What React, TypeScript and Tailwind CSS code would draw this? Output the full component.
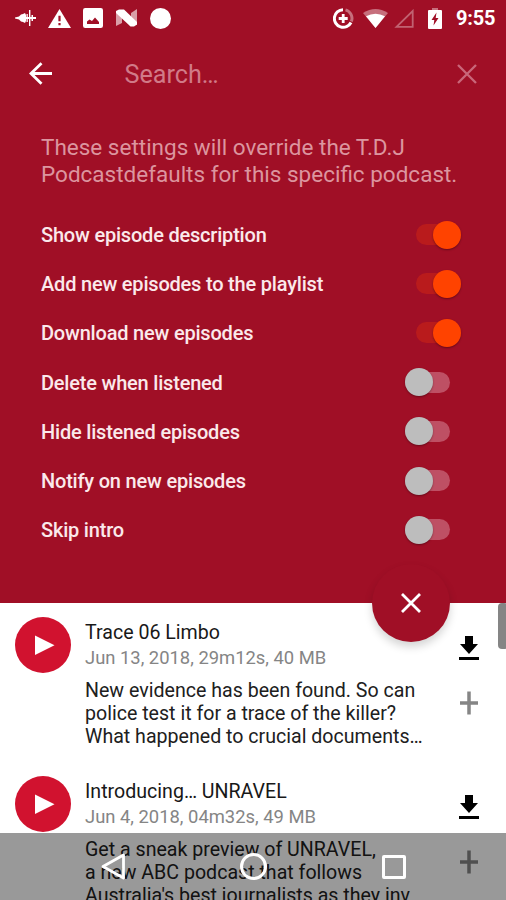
import React from "react";

const settings = [
  { label: "Show episode description", on: true },
  { label: "Add new episodes to the playlist", on: true },
  { label: "Download new episodes", on: true },
  { label: "Delete when listened", on: false },
  { label: "Hide listened episodes", on: false },
  { label: "Notify on new episodes", on: false },
  { label: "Skip intro", on: false },
];

const episodes = [
  {
    title: "Trace 06 Limbo",
    meta: "Jun 13, 2018, 29m12s, 40 MB",
    lines: ["New evidence has been found. So can", "police test it for a trace of the killer?", "What happened to crucial documents…"],
  },
  {
    title: "Introducing… UNRAVEL",
    meta: "Jun 4, 2018, 04m32s, 49 MB",
    lines: ["Get a sneak preview of UNRAVEL,", "a new ABC podcast that follows", "Australia's best journalists as they inv"],
  },
];

function StatusBar() {
  return (
    <div className="flex h-9 items-center pl-[15px] pr-[10px] text-white">
      <svg className="w-[21px] h-[18px]" viewBox="0 0 21 18" fill="white">
        <path d="M0 8.500L4 7.500L6 5.500L8 5L10 4L11 6V12L10 14L8 13L6 12.500L4 10.500L0 9.500Z" />
        <path d="M10 8h11v2h-11z" />
        <path d="M11.500 5h1.300v8h-1.300zM14 1h1.400v16h-1.400zM16.500 6h1.500v6h-1.500z" />
      </svg>
      <svg className="ml-3 w-[23px] h-[19px]" viewBox="0 0 23 20" preserveAspectRatio="none">
        <path d="M11.500 0L23 20H0Z" fill="white" />
        <path d="M10.400 7h2.200v6h-2.200zM10.400 14.800h2.200v2.300h-2.200z" fill="#a00f26" />
      </svg>
      <svg className="ml-3 w-5 h-5" viewBox="0 0 20 20">
        <rect width="20" height="20" rx="2.200" fill="white" />
        <path d="M4 16v-2.500l2.500-2 2.500 1.500 3-3.500 4 4.500v2z" fill="#a00f26" />
      </svg>
      <svg className="ml-[13px] w-[21px] h-[18px]" viewBox="0 0 21 18">
        <path d="M0 2L6 6V14L0 17ZM15 4L21 0V16L15 12Z" fill="white" opacity=".6" />
        <path d="M0 2L3 .5H8L21 13V15.500L18 17.500H14.500L0 4Z" fill="white" />
      </svg>
      <div className="ml-[13px] h-[21px] w-[21px] rounded-full bg-white" />
      <div className="grow" />
      <svg className="w-[21px] h-[21px]" viewBox="0 0 21 21" fill="none" stroke="white" strokeWidth="3">
        <path d="M10 1.700A8.800 8.800 0 1 0 18 14.500" />
        <path d="M12.500 1.900A8.800 8.800 0 0 1 18.400 13.500" opacity=".4" />
        <path d="M10.200 6v9M5.700 10.500h9" strokeWidth="2.800" />
      </svg>
      <svg className="ml-[9px] w-[25px] h-[19px]" viewBox="0 0 25 19">
        <path d="M0 4Q12.500-4 25 4L12.500 19Z" fill="white" opacity=".4" />
        <path d="M3 7.300Q12.500 2 22 7.300L12.500 19Z" fill="white" />
      </svg>
      <svg className="ml-[6px] w-5 h-[19px]" viewBox="0 0 20 19">
        <path d="M18.700 2V17.900H2.500Z" fill="none" stroke="white" strokeWidth="1.800" opacity=".35" />
      </svg>
      <svg className="ml-[14px] w-[14px] h-[21px]" viewBox="0 0 14 21">
        <path d="M4 0h6v2H4z" fill="white" opacity=".4" />
        <rect y="2" width="14" height="19" rx="1" fill="white" />
        <path d="M8.500 4.500L3.500 12H6.300L5.500 17.500L10.500 10H7.700Z" fill="#a00f26" />
      </svg>
      <span className="ml-[14px] w-10 whitespace-nowrap text-[20px] font-bold leading-9 tracking-[-0.2px]">9:55</span>
    </div>
  );
}

function Toggle({ on }: { on: boolean }) {
  return on ? (
    <div className="flex h-[21px] w-[45px] items-center justify-end rounded-full bg-[#b91b1c]">
      <div className="h-7 w-7 shrink-0 rounded-full bg-[#ff4300] shadow-[0_1px_2px_rgba(0,0,0,0.35)]" />
    </div>
  ) : (
    <div className="mr-[11px] flex h-[21px] w-[45px] items-center rounded-full bg-[#be5064]">
      <div className="h-7 w-7 shrink-0 rounded-full bg-[#bdbdbd] shadow-[0_1px_2px_rgba(0,0,0,0.35)]" />
    </div>
  );
}

function Episode({ title, meta, lines }: (typeof episodes)[number]) {
  return (
    <article className="flex h-[159px] shrink-0 pl-[14.500px] pt-[14px]">
      <svg className="w-14 h-14 shrink-0" viewBox="0 0 56 56">
        <circle cx="28" cy="28" r="28" fill="#d1122f" />
        <path d="M20 18.500V38L39.500 28.200Z" fill="white" />
      </svg>
      <div className="ml-[14.500px] w-[360px] whitespace-nowrap">
        <h2 className="mt-[3px] text-[19.600px] leading-[26px] text-[#181818]">{title}</h2>
        <p className="text-[18.400px] leading-[24px] text-[#858585]">{meta}</p>
        <div className="mt-[9px] text-[19.600px] leading-[23px] text-[#202020]">
          {lines.map((line) => <p key={line}>{line}</p>)}
        </div>
      </div>
      <div className="ml-[14px] flex w-5 flex-col items-center">
        <svg className="mt-[18.500px] w-5 h-6" viewBox="0 0 20 24">
          <path d="M6 0h8v8h5l-9 10L1 8h5zM0 21h20v3H0z" fill="black" />
        </svg>
        <svg className="mt-[31px] w-[18px] h-6" viewBox="0 0 18 24">
          <path d="M9 0.500v23M0 12h18" stroke="#858585" strokeWidth="3.500" />
        </svg>
      </div>
    </article>
  );
}

export default function App() {
  return (
    <main className="relative flex h-[900px] w-[506px] flex-col overflow-hidden bg-white font-['Roboto',sans-serif]">
      <header className="h-[603px] shrink-0 bg-[#a00f26]">
        <StatusBar />
        <div className="flex h-[75px] items-center pl-[29px] pr-[29px]">
          <svg className="w-[23px] h-[23px]" viewBox="0 0 23 23" fill="none" stroke="white" strokeWidth="2.800">
            <path d="M12.500 1.200L2 11.500L12.500 21.800M2 11.500H23" />
          </svg>
          <span className="ml-[72.500px] mt-[3px] text-[25.200px] leading-8 text-[#d17a88]">Search…</span>
          <svg className="ml-auto w-5 h-5" viewBox="0 0 20 20" stroke="#c9677a" strokeWidth="2.300">
            <path d="M1 1L19 19M19 1L1 19" />
          </svg>
        </div>
        <p className="ml-[41px] mt-[23px] whitespace-nowrap text-[22.500px] leading-[27px] text-[#dc959f]">
          These settings will override the T.D.J
          <br />
          Podcastdefaults for this specific podcast.
        </p>
        <div className="mt-[22px] pl-[41px] pr-[45px]">
          {settings.map(({ label, on }) => (
            <div key={label} className="flex h-[49.200px] items-center justify-between">
              <span className="mt-px whitespace-nowrap text-[20px] font-medium leading-6 tracking-[-0.2px] text-[#fbe9eb]">{label}</span>
              <Toggle on={on} />
            </div>
          ))}
        </div>
      </header>
      <section className="flex min-h-0 grow flex-col overflow-hidden">
        {episodes.map((episode) => <Episode key={episode.title} {...episode} />)}
      </section>
      <button className="absolute left-[372px] top-[564px] flex h-[78px] w-[78px] items-center justify-center rounded-full bg-[#a00f26] shadow-[0_5px_9px_rgba(0,0,0,0.17)]">
        <svg className="w-5 h-5" viewBox="0 0 20 20" stroke="white" strokeWidth="2.800">
          <path d="M1 1L19 19M19 1L1 19" />
        </svg>
      </button>
      <div className="absolute left-[498px] top-[603px] h-[46px] w-2.5 rounded-[4px] bg-[#858585]" />
      <nav className="absolute inset-x-0 bottom-0 flex h-[67px] items-center bg-black/40 pl-[101px]">
        <svg className="w-6 h-[27px]" viewBox="0 0 24 27" fill="none" stroke="white" strokeWidth="2.800" strokeLinejoin="round">
          <path d="M22.500 2V25L2 13.500Z" />
        </svg>
        <div className="ml-[115px] h-[27px] w-[27px] rounded-full border-[3px] border-white" />
        <div className="ml-[115px] h-6 w-6 rounded-[2px] border-[3px] border-white" />
      </nav>
    </main>
  );
}
